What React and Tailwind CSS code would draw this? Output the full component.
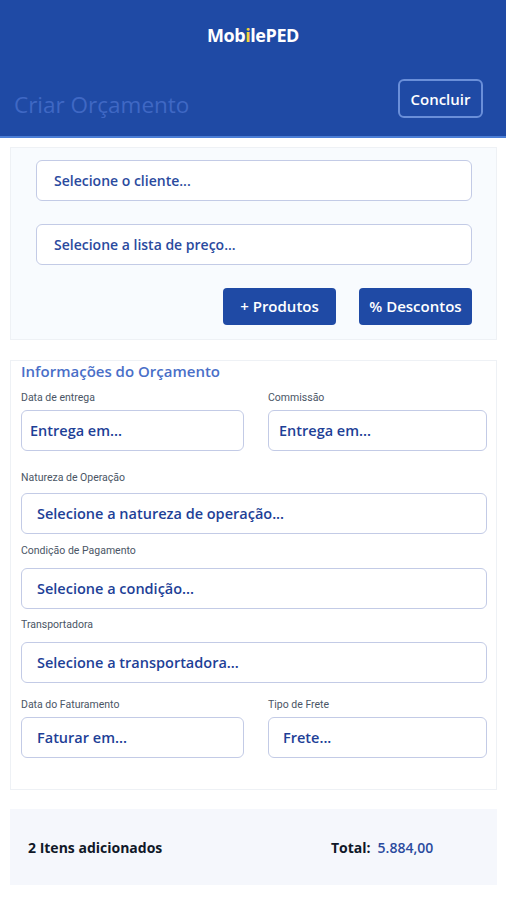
import React from 'react';

const font = { fontFamily: '"Open Sans", "Liberation Sans", sans-serif' };

const Field = ({ label, text, pad = 'pl-4', gap = 'mb-[5px]' }) => (
    <div className="flex flex-col">
        <span className={`text-[10.5px] text-gray-600 h-[15px] leading-[15px] ${gap}`} style={{ fontFamily: 'Roboto, sans-serif' }}>{label}</span>
        <div className={`h-[41px] border border-[#c3cbe6] rounded-md bg-white flex items-center ${pad} text-[14.5px] font-semibold text-[#1e3f97]`}>
            {text}
        </div>
    </div>
);

const App = () => {
    return (
        <div className="w-[506px] h-[900px] bg-white" style={font}>
            {/* Header */}
            <div className="h-[138px] bg-[#1f4aa5] border-b-2 border-[#4b7ed6] flex flex-col">
                <div className="h-[70px] flex items-center justify-center">
                    <span className="text-white text-[18px] font-bold tracking-tight">
                        Mob<span className="text-[#f2d43a]">i</span>lePED
                    </span>
                </div>
                <div className="flex items-center justify-between pl-[14px] pr-[23px] mt-[6px]">
                    <span className="text-[22.5px] text-[#3f68c4] mt-[12px]">Criar Orçamento</span>
                    <button className="h-[39px] w-[85px] border-2 border-[#6a8fd9] rounded-md text-white text-[15px] font-semibold">
                        Concluir
                    </button>
                </div>
            </div>

            {/* Cliente / lista */}
            <div className="ml-[10px] w-[487px] mt-[9px] bg-[#f8fbfe] border border-[#eef1f5] pl-[25px] pr-[24px] pt-[12px] pb-[14px] flex flex-col">
                <div className="h-[41px] border border-[#c3cbe6] rounded-md bg-white flex items-center pl-[17px] text-[14px] font-semibold text-[#2a4a9e]">
                    Selecione o cliente...
                </div>
                <div className="h-[41px] mt-[23px] border border-[#c3cbe6] rounded-md bg-white flex items-center pl-[17px] text-[14px] font-semibold text-[#2a4a9e]">
                    Selecione a lista de preço...
                </div>
                <div className="flex justify-end gap-[23px] mt-[23px]">
                    <button className="w-[113px] h-[37px] bg-[#1f4aa5] rounded text-white text-[15px] font-semibold">+ Produtos</button>
                    <button className="w-[113px] h-[37px] bg-[#1f4aa5] rounded text-white text-[15px] font-semibold">% Descontos</button>
                </div>
            </div>

            {/* Informações */}
            <div className="ml-[10px] w-[487px] mt-[20px] bg-white border border-[#eef1f5] pl-[10px] pr-[9px] pb-[31px] flex flex-col">
                <span className="text-[15px] font-semibold text-[#4a6fc8] h-[20px] leading-[20px]">Informações do Orçamento</span>
                <div className="grid grid-cols-[223px_1fr] gap-x-[24px] mt-[9px]">
                    <Field label="Data de entrega" text="Entrega em..." pad="pl-[8px]" />
                    <Field label="Commissão" text="Entrega em..." pad="pl-[10px]" />
                </div>
                <div className="mt-[19px]">
                    <Field label="Natureza de Operação" text="Selecione a natureza de operação..." pad="pl-[15px]" gap="mb-[8px]" />
                </div>
                <div className="mt-[9px]">
                    <Field label="Condição de Pagamento" text="Selecione a condição..." pad="pl-[15px]" gap="mb-[10px]" />
                </div>
                <div className="mt-[8px]">
                    <Field label="Transportadora" text="Selecione a transportadora..." pad="pl-[15px]" gap="mb-[10px]" />
                </div>
                <div className="grid grid-cols-[223px_1fr] gap-x-[24px] mt-[14px]">
                    <Field label="Data do Faturamento" text="Faturar em..." pad="pl-[15px]" />
                    <Field label="Tipo de Frete" text="Frete..." pad="pl-[14px]" />
                </div>
            </div>

            {/* Rodapé */}
            <div className="ml-[10px] w-[487px] mt-[19px] h-[76px] bg-[#f5f7fc] flex items-center pl-[18px]">
                <span className="text-[14px] font-bold text-gray-900 w-[303px]">2 Itens adicionados</span>
                <span className="text-[14px] font-bold text-gray-900">Total:</span>
                <span className="text-[14px] font-semibold text-[#2a4a9e] ml-[7px]">5.884,00</span>
            </div>
        </div>
    );
};

export default App;
